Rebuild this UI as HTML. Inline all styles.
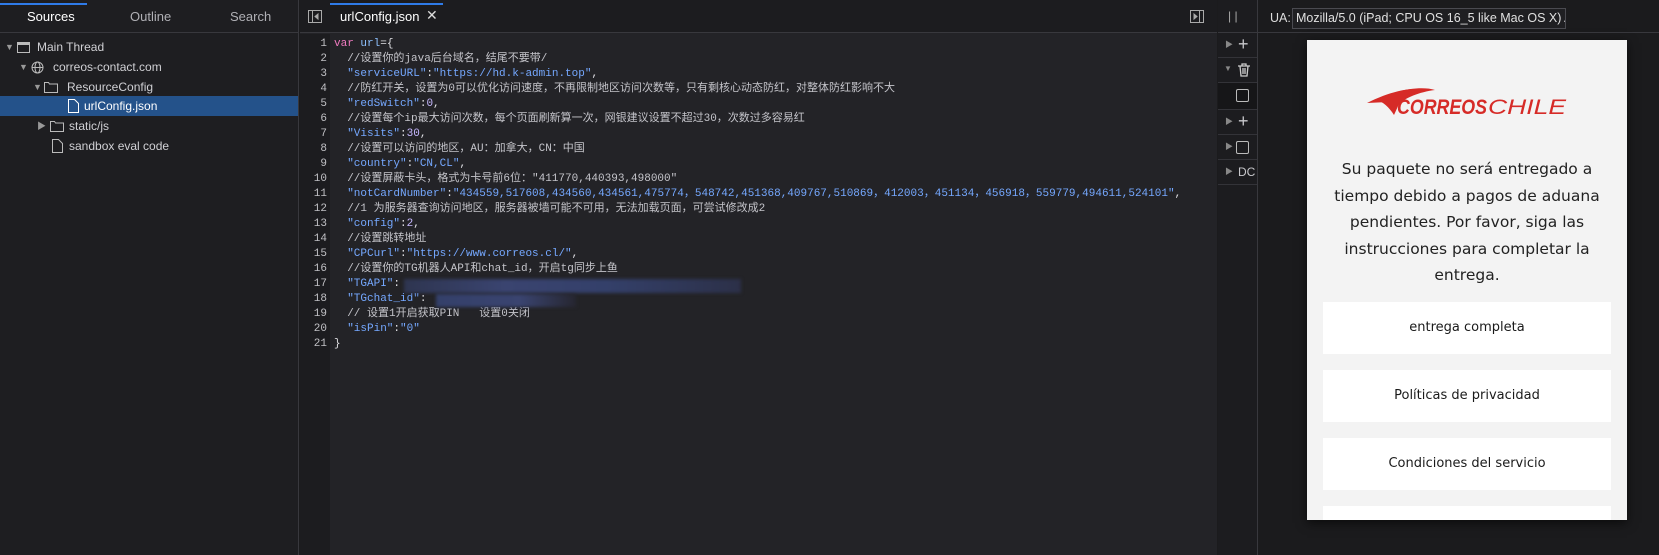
<!DOCTYPE html>
<html><head><meta charset="utf-8">
<style>
*{box-sizing:border-box;margin:0;padding:0}
body{width:1659px;height:555px;overflow:hidden;background:#1b1b1d;font-family:"Liberation Sans","Noto Sans CJK SC",sans-serif;color:#dcdcdf;position:relative}
.abs{position:absolute}
#left{left:0;top:0;width:299px;height:555px;background:#1e1e21;border-right:1px solid #38383d}
.tabs{height:33px;border-bottom:1px solid #38383d;position:relative;font-size:13px}
.tabs span{position:absolute;top:9px}
.row{position:absolute;left:0;width:298px;height:20px;font-size:12px;line-height:20px;color:#d0d0d4}
.row.sel{background:#24528a;color:#fff}
#editor{left:300px;top:0;width:917px;height:555px;background:#232327}
#gutter{left:300px;top:34px;width:30px;height:521px;background:#1c1c1f}
.etab{left:300px;top:0;width:917px;height:33px;border-bottom:1px solid #38383d;background:#1c1c1f}
pre{position:absolute;font-family:"Liberation Mono","Noto Sans CJK SC",monospace;font-size:11px;line-height:15px}
.ln{left:300px;top:37px;width:27px;text-align:right;color:#c0c0c4}
.code{left:334px;top:37px;color:#c4c4ca}
.k{color:#f17bc1}.v{color:#8dc1ff}.s{color:#75a8ff}.n{color:#c6b8ff}.p{color:#e0e0e4}
#mid{left:1218px;top:0;width:40px;height:555px;background:#1c1c1f;border-right:1px solid #38383d}
.mrow{position:absolute;left:0;width:39px;height:25px;border-bottom:1px solid #333338;color:#c8c8cc;font-size:13px}
#right{left:1258px;top:0;width:401px;height:555px;background:#1b1b1d}
.btn{position:absolute;left:16px;width:288px;height:52px;background:#fff;color:#1a1a1a;font-size:13px;text-align:center;line-height:52px;font-family:"DejaVu Sans","Liberation Sans",sans-serif}
</style></head><body>
<div id="left" class="abs">
 <div class="tabs">
  <div class="abs" style="left:0;top:3px;width:87px;height:2px;background:#2f7be8"></div>
  <span style="left:27px;color:#fff">Sources</span>
  <span style="left:130px;color:#b0b0b5">Outline</span>
  <span style="left:230px;color:#b0b0b5">Search</span>
 </div>
 <div class="row" style="top:37px"><span style="position:absolute;left:5px;font-size:9px;color:#999">▼</span><span style="position:absolute;left:17px;top:5px;width:13px;height:11px;border:1px solid #bbb;border-top-width:3px"></span><span style="position:absolute;left:37px">Main Thread</span></div>
 <div class="row" style="top:57px"><span style="position:absolute;left:19px;font-size:9px;color:#999">▼</span><svg style="position:absolute;left:31px;top:4px" width="13" height="13" viewBox="0 0 13 13" fill="none" stroke="#bbb"><circle cx="6.5" cy="6.5" r="5.5"/><ellipse cx="6.5" cy="6.5" rx="2.5" ry="5.5"/><path d="M1 6.5h11"/></svg><span style="position:absolute;left:53px">correos-contact.com</span></div>
 <div class="row" style="top:77px"><span style="position:absolute;left:33px;font-size:9px;color:#999">▼</span><svg style="position:absolute;left:44px;top:4px" width="14" height="12" viewBox="0 0 14 12" fill="none" stroke="#bbb"><path d="M.5 1.5h4l1 1.5h8v8.5H.5z"/></svg><span style="position:absolute;left:67px">ResourceConfig</span></div>
 <div class="row sel" style="top:96px"><svg style="position:absolute;left:68px;top:3px" width="11" height="14" viewBox="0 0 11 14" fill="none" stroke="#fff"><path d="M.5.5h6l4 4v9H.5z"/></svg><span style="position:absolute;left:84px">urlConfig.json</span></div>
 <div class="row" style="top:116px"><span style="position:absolute;left:37px;font-size:9px;color:#999">▶</span><svg style="position:absolute;left:50px;top:4px" width="14" height="12" viewBox="0 0 14 12" fill="none" stroke="#bbb"><path d="M.5 1.5h4l1 1.5h8v8.5H.5z"/></svg><span style="position:absolute;left:69px">static/js</span></div>
 <div class="row" style="top:136px"><svg style="position:absolute;left:52px;top:3px" width="11" height="14" viewBox="0 0 11 14" fill="none" stroke="#bbb"><path d="M.5.5h6l4 4v9H.5z"/></svg><span style="position:absolute;left:69px">sandbox eval code</span></div>
</div>
<div id="editor" class="abs"></div>
<div class="etab abs">
 <div class="abs" style="left:30px;top:3px;width:113px;height:2px;background:#2f7be8"></div>
 <svg class="abs" style="left:8px;top:10px" width="14" height="13" viewBox="0 0 14 13" fill="none" stroke="#aaa"><rect x=".5" y=".5" width="13" height="12"/><path d="M4.5 1v11"/><path d="M10 4l-3 2.5 3 2.5z" fill="#aaa"/></svg>
 <span class="abs" style="left:40px;top:9px;font-size:13px;color:#fff">urlConfig.json</span>
 <span class="abs" style="left:126px;top:7px;font-size:14px;color:#ddd">✕</span>
 <svg class="abs" style="left:890px;top:10px" width="14" height="13" viewBox="0 0 14 13" fill="none" stroke="#aaa"><rect x=".5" y=".5" width="13" height="12"/><path d="M9.5 1v11"/><path d="M4 4l3 2.5-3 2.5z" fill="#aaa"/></svg>
</div>
<div id="gutter" class="abs"></div>
<pre class="ln">1
2
3
4
5
6
7
8
9
10
11
12
13
14
15
16
17
18
19
20
21</pre>
<pre class="code"><span class="k">var</span> <span class="v">url</span><span class="p">={</span>
  //设置你的java后台域名，结尾不要带/
  <span class="s">"serviceURL"</span><span class="p">:</span><span class="s">"https://hd.k-admin.top"</span><span class="p">,</span>
  //防红开关，设置为0可以优化访问速度，不再限制地区访问次数等，只有剩核心动态防红，对整体防红影响不大
  <span class="s">"redSwitch"</span><span class="p">:</span><span class="n">0</span><span class="p">,</span>
  //设置每个ip最大访问次数，每个页面刷新算一次，网银建议设置不超过30，次数过多容易红
  <span class="s">"Visits"</span><span class="p">:</span><span class="n">30</span><span class="p">,</span>
  //设置可以访问的地区，AU：加拿大，CN：中国
  <span class="s">"country"</span><span class="p">:</span><span class="s">"CN,CL"</span><span class="p">,</span>
  //设置屏蔽卡头，格式为卡号前6位："411770,440393,498000"
  <span class="s">"notCardNumber"</span><span class="p">:</span><span class="s">"434559,517608,434560,434561,475774，548742,451368,409767,510869，412003，451134，456918，559779,494611,524101"</span><span class="p">,</span>
  //1 为服务器查询访问地区，服务器被墙可能不可用，无法加载页面，可尝试修改成2
  <span class="s">"config"</span><span class="p">:</span><span class="n">2</span><span class="p">,</span>
  //设置跳转地址
  <span class="s">"CPCurl"</span><span class="p">:</span><span class="s">"https://www.correos.cl/"</span><span class="p">,</span>
  //设置你的TG机器人API和chat_id，开启tg同步上鱼
  <span class="s">"TGAPI"</span><span class="p">:</span>
  <span class="s">"TGchat_id"</span><span class="p">:</span>
  // 设置1开启获取PIN   设置0关闭
  <span class="s">"isPin"</span><span class="p">:</span><span class="s">"0"</span>
<span class="p">}</span></pre>
<div class="abs" style="left:404px;top:279px;width:337px;height:14px;background:linear-gradient(90deg,#2e3550,#3a4470 30%,#34406a 60%,#2c3048);filter:blur(1.5px)"></div>
<div class="abs" style="left:436px;top:294px;width:140px;height:13px;background:linear-gradient(90deg,#34406a,#3a4470 60%,#262630);filter:blur(1.5px)"></div>
<div id="mid" class="abs">
 <div class="mrow" style="top:0;height:33px;border-bottom:1px solid #38383d"><span style="position:absolute;left:10px;top:9px;color:#aaa;font-size:12px">| |</span></div>
 <div class="mrow" style="top:33px"><span style="position:absolute;left:7px;top:6px;font-size:8px;color:#888">▶</span><span style="position:absolute;left:20px;top:1px;font-size:18px">+</span></div>
 <div class="mrow" style="top:58px"><span style="position:absolute;left:6px;top:6px;font-size:8px;color:#888">▼</span><svg style="position:absolute;left:20px;top:5px" width="12" height="14" viewBox="0 0 12 14" fill="none" stroke="#ccc" stroke-width="1.3"><path d="M0 3h12M4 3V1h4v2M2 3l1 10h6l1-10M5 5v6M7 5v6"/></svg></div>
 <div class="mrow" style="top:83px;height:27px;background:#161618"><span style="position:absolute;left:18px;top:6px;width:13px;height:13px;border:1.5px solid #bbb;border-radius:2px"></span></div>
 <div class="mrow" style="top:110px"><span style="position:absolute;left:7px;top:6px;font-size:8px;color:#888">▶</span><span style="position:absolute;left:20px;top:1px;font-size:18px">+</span></div>
 <div class="mrow" style="top:135px"><span style="position:absolute;left:7px;top:6px;font-size:8px;color:#888">▶</span><span style="position:absolute;left:18px;top:6px;width:13px;height:13px;border:1.5px solid #bbb;border-radius:2px"></span></div>
 <div class="mrow" style="top:160px"><span style="position:absolute;left:7px;top:6px;font-size:8px;color:#888">▶</span><span style="position:absolute;left:20px;top:5px;font-size:12px">DC</span></div>
</div>
<div id="right" class="abs">
 <div class="abs" style="left:0;top:0;width:401px;height:33px;border-bottom:1px solid #38383d"></div>
 <span class="abs" style="left:12px;top:11px;font-size:12.5px;color:#ddd">UA:</span>
 <div class="abs" style="left:34px;top:8px;width:274px;height:21px;border:1px solid #4a4a50;background:#1f1f22;font-size:12.5px;color:#e0e0e0;line-height:19px;padding-left:3px;white-space:nowrap;overflow:hidden">Mozilla/5.0 (iPad; CPU OS 16_5 like Mac OS X) A</div>
 <div class="abs" style="left:49px;top:40px;width:320px;height:480px;background:#f3f3f3;box-shadow:0 3px 10px rgba(0,0,0,.6);overflow:hidden">
  <svg class="abs" style="left:60px;top:45px" width="205" height="35" viewBox="0 0 205 35">
   <path d="M0 18 C18 9 35 4 48 4 L50 7 C36 8 27 13 21 17 Z" fill="#d62b27"/>
   <path d="M10 15 C30 4 55 1 68 5 C52 7 38 13 32 19 L27 30 C22 22 16 17 10 15Z" fill="#d62b27"/>
   <text x="30" y="29" textLength="90" lengthAdjust="spacingAndGlyphs" font-family="Liberation Sans,sans-serif" font-style="italic" font-weight="bold" font-size="21" fill="#d62b27">CORREOS</text>
   <text x="121" y="29" textLength="78" lengthAdjust="spacingAndGlyphs" font-family="Liberation Sans,sans-serif" font-style="italic" font-size="21" fill="#d62b27">CHILE</text>
  </svg>
  <div class="abs" style="left:12px;top:116px;width:296px;text-align:center;font-size:15.5px;line-height:26.5px;color:#222;font-family:'DejaVu Sans','Liberation Sans',sans-serif">Su paquete no será entregado a tiempo debido a pagos de aduana pendientes. Por favor, siga las instrucciones para completar la entrega.</div>
  <div class="btn" style="top:262px">entrega completa</div>
  <div class="btn" style="top:330px">Políticas de privacidad</div>
  <div class="btn" style="top:398px">Condiciones del servicio</div>
  <div class="btn" style="top:466px"></div>
 </div>
</div>
</body></html>
